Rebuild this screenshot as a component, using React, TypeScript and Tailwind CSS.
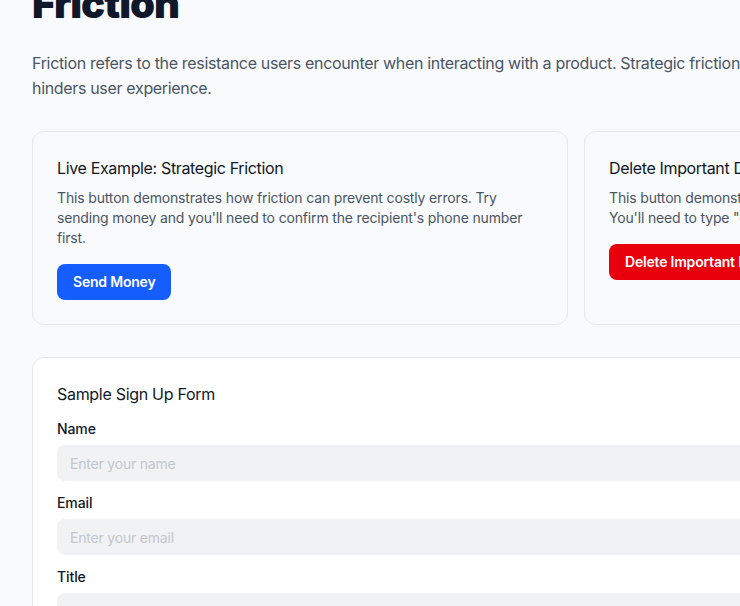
import React from "react";

const font = { fontFamily: "Inter, 'Noto Sans', sans-serif" };

function Field({ label, placeholder }: { label: string; placeholder: string }) {
  return (
    <div className="flex flex-col">
      <label className="block h-5 text-sm leading-5 font-medium tracking-[-0.1px] text-gray-900">{label}</label>
      <input
        className="mt-[6px] h-9 w-full rounded-lg bg-[#f1f2f4] px-[13px] text-sm tracking-[-0.2px] text-gray-900 outline-none placeholder:text-[#c3c6cc]"
        placeholder={placeholder}
      />
    </div>
  );
}

export default function App() {
  return (
    <div className="min-h-screen w-[1152px] bg-gray-50" style={font}>
      <div className="px-8 pb-10">
        <h1 className="-mt-[16px] text-[40px] leading-[40px] font-black tracking-tight text-[#0f172a]">
          Friction
        </h1>
        <p className="mt-[27px] text-base leading-[25px] tracking-[-0.33px] text-gray-600">
          Friction refers to the resistance users encounter when interacting with a product. Strategic friction can
          prevent errors, while unnecessary friction hinders user experience.
        </p>

        <div className="mt-[30px] grid grid-cols-2 gap-4">
          <div className="rounded-xl border border-gray-200 bg-gray-50 p-6">
            <h3 className="text-base leading-6 font-normal tracking-[-0.35px] text-gray-900">
              Live Example: Strategic Friction
            </h3>
            <p className="mt-2 text-sm leading-5 tracking-[-0.16px] text-gray-600">
              This button demonstrates how friction can prevent costly errors. Try sending money and you'll need to
              confirm the recipient's phone number first.
            </p>
            <button className="mt-4 h-9 rounded-lg bg-blue-600 px-4 text-sm font-semibold tracking-[-0.2px] text-white">
              Send Money
            </button>
          </div>
          <div className="rounded-xl border border-gray-200 bg-gray-50 p-6">
            <h3 className="text-base leading-6 font-normal tracking-[-0.35px] text-gray-900">Delete Important Data</h3>
            <p className="mt-2 text-sm leading-5 tracking-[-0.16px] text-gray-600">
              This button demonstrates how friction can prevent accidental deletions. You'll need to type "delete" to
              confirm this action.
            </p>
            <button className="mt-4 h-9 rounded-lg bg-red-600 px-4 text-sm font-semibold tracking-[-0.2px] text-white">
              Delete Important Data
            </button>
          </div>
        </div>

        <div className="mt-8 rounded-xl border border-gray-200 bg-white p-6">
          <h3 className="mb-[13px] text-base leading-6 font-normal tracking-[-0.3px] text-gray-900">
            Sample Sign Up Form
          </h3>
          <div className="flex flex-col gap-3">
            <Field label="Name" placeholder="Enter your name" />
            <Field label="Email" placeholder="Enter your email" />
            <Field label="Title" placeholder="Enter your title" />
            <Field label="Company" placeholder="Enter your company" />
          </div>
          <button className="mt-4 h-9 rounded-lg bg-blue-600 px-4 text-sm font-semibold text-white">Sign Up</button>
        </div>
      </div>
    </div>
  );
}
